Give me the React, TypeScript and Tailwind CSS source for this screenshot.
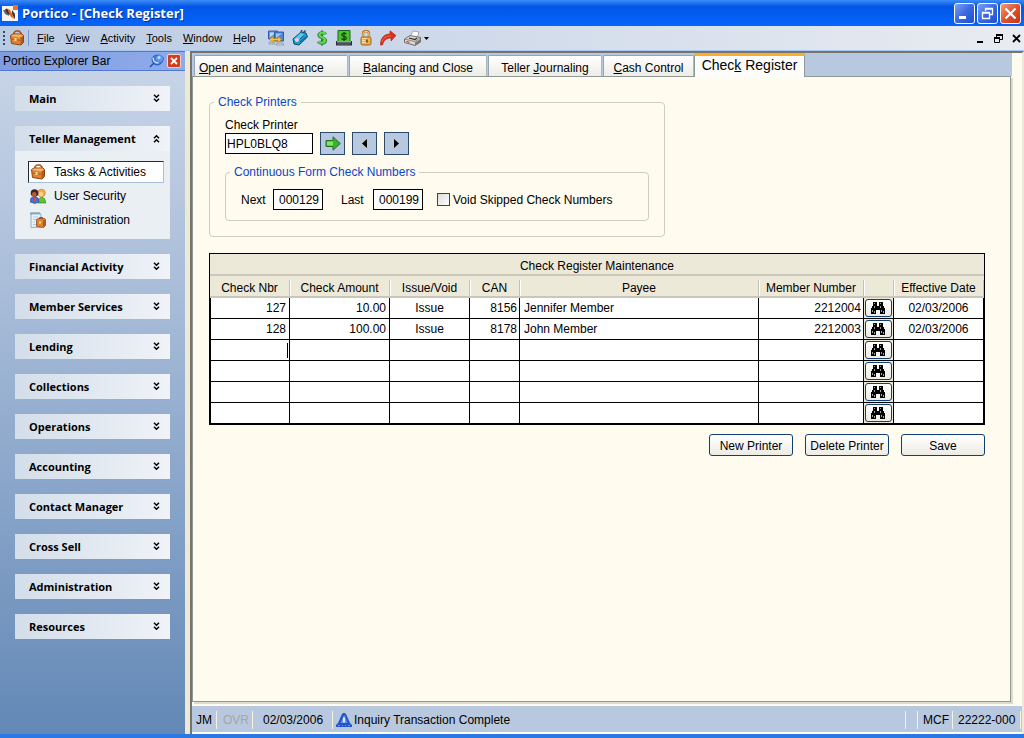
import React from "react";

interface CheckRow {
    nbr: string;
    amount: string;
    type: string;
    can: string;
    payee: string;
    member: string;
    date: string;
}

const emptyRow: CheckRow = { nbr: "", amount: "", type: "", can: "", payee: "", member: "", date: "" };

const rows: CheckRow[] = [
    { nbr: "127", amount: "10.00", type: "Issue", can: "8156", payee: "Jennifer Member", member: "2212004", date: "02/03/2006" },
    { nbr: "128", amount: "100.00", type: "Issue", can: "8178", payee: "John Member", member: "2212003", date: "02/03/2006" },
    emptyRow,
    emptyRow,
    emptyRow,
    emptyRow,
];

const columns: { key: keyof CheckRow | "lookup"; label: string; width: string; align: string }[] = [
    { key: "nbr", label: "Check Nbr", width: "w-20", align: "text-right" },
    { key: "amount", label: "Check Amount", width: "w-[100px]", align: "text-right" },
    { key: "type", label: "Issue/Void", width: "w-20", align: "text-center" },
    { key: "can", label: "CAN", width: "w-[50px]", align: "text-right" },
    { key: "payee", label: "Payee", width: "", align: "text-left" },
    { key: "member", label: "Member Number", width: "w-[105px]", align: "text-right" },
    { key: "lookup", label: "", width: "w-[30px]", align: "" },
    { key: "date", label: "Effective Date", width: "w-[90px]", align: "text-center" },
];

const menus = ["File", "View", "Activity", "Tools", "Window", "Help"];

const sections = [
    "Financial Activity",
    "Member Services",
    "Lending",
    "Collections",
    "Operations",
    "Accounting",
    "Contact Manager",
    "Cross Sell",
    "Administration",
    "Resources",
];

/* ---------- icons ---------- */

const AppIcon = () => (
    <svg width="16" height="16" viewBox="0 0 16 16">
        <rect y="1" width="16" height="15" fill="#f4f3f1" />
        <path d="M11 0h5v5h-5z" fill="#f0701c" />
        <path d="M1 5l5 0 1 6-4-2z" fill="#5b6877" />
        <path d="M4 3l4 2 5 9-4-2z" fill="#e8641a" />
        <path d="M10 5l3 4v5l-3-5z" fill="#4a3a34" />
        <path d="M3 4l2 0 3 6-2-1z" fill="#33231e" />
    </svg>
);

const BriefcaseIcon = () => (
    <svg width="16" height="16" viewBox="0 0 16 16">
        <path d="M5 5V2.500L7 1h3l2 2v2" fill="none" stroke="#a8491c" strokeWidth="1.500" />
        <path d="M1.500 5.500L4 4h9l1.500 1.500v7L12 15 2.500 13.500z" fill="#dd8432" stroke="#94420f" />
        <path d="M2 6l9 1.500L14 6l-1.500-1.500H4z" fill="#f3b468" />
        <path d="M11.500 7.500V14.500l2.500-2V6z" fill="#b35a1c" />
        <path d="M2 9l9.500 1.500" stroke="#b0601f" />
        <rect x="5.500" y="8" width="2" height="3" fill="#fbe08a" />
    </svg>
);

const UsersIcon = () => (
    <svg width="16" height="16" viewBox="0 0 16 16">
        <path d="M8 15l.5-4 3-2 3 1.500 1.500 4.500z" fill="#62c331" stroke="#2d7d1b" strokeWidth=".6" />
        <circle cx="11.500" cy="5" r="3.800" fill="#f0b148" stroke="#ba7420" strokeWidth=".6" />
        <circle cx="11" cy="6.200" r="2.200" fill="#f8d49a" />
        <path d="M0 14l1-4 3.500-1.500L8 10l1 4-4 1.500z" fill="#3f72dc" stroke="#1c3f98" strokeWidth=".6" />
        <circle cx="4.500" cy="5" r="3.800" fill="#3b2430" />
        <circle cx="4.200" cy="6.400" r="2.300" fill="#bd5a2f" />
        <path d="M4 9.500l2 2-2 3-1-3z" fill="#e9403a" />
    </svg>
);

const AdminIcon = () => (
    <svg width="16" height="16" viewBox="0 0 16 16">
        <path d="M1 1h9l1 2v12l-10 .5z" fill="#e6f2fb" stroke="#8daecb" />
        <path d="M1 .5v2M3 .5v2M5 .5v2M7 .5v2M9 .5v2" stroke="#5e7690" />
        <path d="M3 5h5M3 7.500h3M3 10h2M3 12.500h3" stroke="#a5cfe8" />
        <path d="M9.500 7V5.500h3V7" fill="none" stroke="#9a4d16" />
        <path d="M6.500 7.500l2-1h6l1 1v6l-2 2-7-1z" fill="#dd8432" stroke="#98490f" strokeWidth=".8" />
        <path d="M13 8.500v6.500l2-1.500V7.500z" fill="#b35a1c" />
        <rect x="9" y="9.500" width="2" height="2" fill="#fbe08a" />
    </svg>
);

const NetworkIcon = () => (
    <svg width="16" height="16" viewBox="0 0 16 16">
        <path d="M.5 1h9v8h-9z" fill="#5f96e8" stroke="#2f5ca8" />
        <path d="M2 2.500h6L2 7z" fill="#b8dcff" />
        <path d="M6.500 2h9v9h-9z" fill="#4c85de" stroke="#2f5ca8" />
        <path d="M8 3.500h6L8 8z" fill="#9bc9fa" />
        <path d="M1 12h5l1 2H1zM9 13h6l1 2H8z" fill="#c9d3df" stroke="#66758a" strokeWidth=".5" />
        <path d="M1.500 9.500L5 6.500v2h5v-2l3.500 3-3.500 3v-2H5v2z" fill="#fcc737" stroke="#b9821a" strokeWidth=".6" />
    </svg>
);

const PhoneIcon = () => (
    <svg width="16" height="16" viewBox="0 0 16 16">
        <path d="M1 9L9 2l5 1 1.500 4L7 15l-5-1z" fill="#1f9cc4" stroke="#0b4a74" />
        <path d="M9 2.500L12.500 5 5 11.500 1.500 9.500z" fill="#54c8e4" />
        <path d="M9 2l1-2M11.500 2.500l2-2" stroke="#0d5a88" strokeWidth="1.500" />
        <circle cx="5" cy="10" r="2" fill="#f4c8ef" />
        <path d="M8 12l6-5M8 9l4-3.500" stroke="#095c8c" />
    </svg>
);

const DollarIcon = () => (
    <svg width="12" height="16" viewBox="0 0 12 16">
        <path d="M6 .5v15" stroke="#1d7f31" strokeWidth="2" />
        <path d="M9.500 4.500C8.500 2.500 3.500 2 3 5c0 3 6.500 2.500 6.500 5.500-.5 3.500-6 3-7 .8" fill="none" stroke="#3b8f45" strokeWidth="3.400" />
        <path d="M9.500 4.200C8.500 2.500 3.800 2 3.500 5c0 2.500 6 2.500 5.500 5.500-.5 3-5.500 2.500-6.500.8" fill="none" stroke="#62d94d" strokeWidth="2" />
    </svg>
);

const CashIcon = () => (
    <svg width="16" height="16" viewBox="0 0 16 16">
        <path d="M2 .5h12V12H2z" fill="#4fc32d" stroke="#14671d" />
        <path d="M10.300 4.300C9.500 2.800 6 2.800 5.800 4.700c0 2.300 4.700 1.200 4.600 3.400C10 10.100 6.500 10.200 5.500 8.300M8 2v9" fill="none" stroke="#123f17" strokeWidth="1.200" />
        <path d="M0 11h16v4.500H0z" fill="#2c3238" />
        <path d="M1 11h14v1.500H1z" fill="#97a0a8" />
        <path d="M1.500 14h13" stroke="#697179" />
    </svg>
);

const LockIcon = () => (
    <svg width="12" height="16" viewBox="0 0 12 16">
        <path d="M3 8V4c0-4 6-4 6 0v4" fill="none" stroke="#b47a2b" strokeWidth="2.400" />
        <path d="M3 8V4c0-3.500 6-3.500 6 0v4" fill="none" stroke="#f6cf87" strokeWidth="1" />
        <rect x="1" y="7" width="10" height="8" rx="1.500" fill="#f0af4b" stroke="#9f631c" />
        <path d="M2 8.500h5M2 10.500h3M2 12.500h4" stroke="#fde1a1" />
        <path d="M7 9.500v3" stroke="#76400f" strokeWidth="1.500" />
    </svg>
);

const RedArrowIcon = () => (
    <svg width="16" height="16" viewBox="0 0 16 16">
        <path d="M.5 15C.5 8 4 4 10 4V.8l6 4.700-5 5.500V8C6.500 8 4 10 2.500 15z" fill="#e0301c" stroke="#a3200f" strokeWidth=".6" />
        <path d="M2 12c1-4 4-6 9-6" fill="none" stroke="#f4694e" />
    </svg>
);

const PrinterIcon = () => (
    <svg width="17" height="16" viewBox="0 0 17 16">
        <path d="M6 7l3-6 6 1-2 6z" fill="#fff" stroke="#8a8a8a" strokeWidth=".7" />
        <path d="M.5 9L6 5.500l10.500 2V12L11 15.500.5 12.500z" fill="#d8d7d0" stroke="#55564f" strokeWidth=".8" />
        <path d="M1 9.200l10 2.300 5-3.500" fill="none" stroke="#8a8a83" />
        <path d="M5 8l6 1.500 2-1.500" fill="none" stroke="#2e2e2b" strokeWidth="1.200" />
        <path d="M11 12.500v3l5.500-3.500V9z" fill="#77776f" />
        <path d="M2.500 11.500l3 .8" stroke="#c82020" strokeWidth="1" />
    </svg>
);

const PinIcon = () => (
    <svg width="16" height="14" viewBox="0 0 16 14">
        <path d="M1 13l5-5" stroke="#1c4fae" strokeWidth="1.500" />
        <path d="M3 5c0-3 4-4 7-4l4 2c1 4-2 8-6 8-3 0-5-3-5-6z" fill="#3f78dc" stroke="#1c46a2" strokeWidth=".8" />
        <circle cx="10.500" cy="4.500" r="3.600" fill="#5f95ec" />
        <path d="M4 3.500c0 3.500 2 5.500 5.500 5.500" fill="none" stroke="#dbe9ff" strokeWidth="1.300" />
        <circle cx="10" cy="3.500" r="1.500" fill="#c6dcfd" />
    </svg>
);

const AlertIcon = () => (
    <svg width="16" height="16" viewBox="0 0 16 16">
        <path d="M7 1h2l1.500 2L14 11l2 2v2H0v-2l2-2 3.500-8z" fill="#2453c6" />
        <path d="M7.500 3.500L4.500 11h7L9 3.500z" fill="#5f92ee" />
        <path d="M2 13.500h2M6 13.500h1M9 13.500h1M12 13.500h2" stroke="#6d9df0" />
        <path d="M8 5.500v5" stroke="#fff" strokeWidth="1.600" />
    </svg>
);

const BinocularsIcon = () => (
    <svg width="14" height="12" viewBox="0 0 14 12" shapeRendering="crispEdges">
        <path d="M2 0h4v3H2zM8 0h4v3H8zM2 3h4v2H2zM8 3h4v2H8zM1 4h12v4H1zM0 6h5v6H0zM9 6h5v6H9z" fill="#000" />
        <path d="M6 3h2v1H6zM5 8h4v4H5z" fill="#f6f5f1" />
        <path d="M3 1h1v1H3zM9 1h1v1H9zM3 4h1v2H3zM9 4h1v2H9zM1 8h1v2H1zM3 9h1v2H3zM10 8h1v2h-1zM12 9h1v2h-1z" fill="#a3a398" />
    </svg>
);

const Chevrons = ({ up }: { up?: boolean }) => (
    <svg width="7" height="9" viewBox="0 0 7 9" className={up ? "rotate-180" : ""}>
        <path d="M1 .8l2.500 2.400L6 .8M1 4.800l2.500 2.400L6 4.800" fill="none" stroke="#000" strokeWidth="1.500" />
    </svg>
);

const WindowGlyph = ({ kind }: { kind: "min" | "restore" | "close" }) => (
    <svg width="13" height="13" viewBox="0 0 13 13" fill="none" stroke="currentColor">
        {kind === "min" && <path d="M1 10.500h7" strokeWidth="3" />}
        {kind === "restore" && (
            <>
                <path d="M4.500 4V1.500h7v6H9M4 2h8" strokeWidth="1.300" />
                <path d="M1.500 5.500h7v6h-7zM1 6h8" strokeWidth="1.300" />
            </>
        )}
        {kind === "close" && <path d="M1.500 1.500l10 10M11.500 1.500l-10 10" strokeWidth="2.200" />}
    </svg>
);

const MdiGlyph = ({ kind }: { kind: "min" | "restore" | "close" }) => (
    <svg width="9" height="9" viewBox="0 0 9 9" fill="none" stroke="#000">
        {kind === "min" && <path d="M1 8h6" strokeWidth="2" />}
        {kind === "restore" && (
            <>
                <path d="M2.500 3V.5h6v5H6M.5 3.500h5v5h-5z" />
                <path d="M2 1h7M0 4h6" strokeWidth="2" />
            </>
        )}
        {kind === "close" && <path d="M1 1l7 7M8 1L1 8" strokeWidth="1.800" />}
    </svg>
);

/* ---------- window chrome ---------- */

const blueButton =
    "flex h-[21px] w-[21px] items-center justify-center rounded-[3px] border border-white bg-linear-to-br from-[#7f9ff0] via-[#3a68e2] to-[#1f4fd0] text-white";

const TitleBar = () => (
    <header className="flex h-[26px] items-center gap-1 bg-linear-to-b from-[#3a8bf6] via-[#0256e6] via-25% to-[#0565fc] pr-[3px] pl-0.5">
        <AppIcon />
        <h1 className="flex-1 font-['Open_Sans',sans-serif] text-[13px] leading-5 font-bold text-white [text-shadow:1px_1px_0_#0b2f8c]">
            Portico - [Check Register]
        </h1>
        <div className="flex gap-0.5">
            <button aria-label="Minimize" className={blueButton}>
                <WindowGlyph kind="min" />
            </button>
            <button aria-label="Restore" className={blueButton}>
                <WindowGlyph kind="restore" />
            </button>
            <button aria-label="Close" className="flex h-[21px] w-[21px] items-center justify-center rounded-[3px] border border-white bg-linear-to-br from-[#f09a78] via-[#e2512c] to-[#c6330f] text-white">
                <WindowGlyph kind="close" />
            </button>
        </div>
    </header>
);

const MenuBar = () => (
    <div className="flex h-[25px] items-center border-b border-[#a9c6f0] bg-linear-to-r from-[#b9cae3] via-[#cfdaea] via-45% to-[#e9ecf1] pr-[3px] pl-[3px]">
        <div className="mr-1 flex flex-col gap-0.5">
            <span className="h-0.5 w-0.5 bg-[#33496e]" />
            <span className="h-0.5 w-0.5 bg-[#33496e]" />
            <span className="h-0.5 w-0.5 bg-[#33496e]" />
            <span className="h-0.5 w-0.5 bg-[#33496e]" />
        </div>
        <BriefcaseIcon />
        <span className="mr-2 ml-[3px] h-4 w-px bg-[#7796c4]" />
        <nav className="flex gap-[11px] text-[11px] leading-4">
            {menus.map((menu) => (
                <button key={menu}>
                    <u>{menu[0]}</u>
                    {menu.slice(1)}
                </button>
            ))}
        </nav>
        <div className="ml-3 flex items-center gap-2">
            <button aria-label="Connections"><NetworkIcon /></button>
            <button aria-label="Phone"><PhoneIcon /></button>
            <button aria-label="Funds"><DollarIcon /></button>
            <button aria-label="Cash drawer"><CashIcon /></button>
            <button aria-label="Lock"><LockIcon /></button>
            <button aria-label="Forward"><RedArrowIcon /></button>
            <button aria-label="Print" className="flex items-center gap-[3px]">
                <PrinterIcon />
                <svg width="5" height="3" viewBox="0 0 5 3"><path d="M0 0h5L2.500 3z" /></svg>
            </button>
        </div>
        <div className="ml-auto flex gap-[9px]">
            <button aria-label="Minimize document"><MdiGlyph kind="min" /></button>
            <button aria-label="Restore document"><MdiGlyph kind="restore" /></button>
            <button aria-label="Close document"><MdiGlyph kind="close" /></button>
        </div>
    </div>
);

/* ---------- explorer bar ---------- */

const SectionHeader = ({ label, open }: { label: string; open?: boolean }) => (
    <button
        aria-expanded={!!open}
        className="flex h-[25px] w-full items-center justify-between bg-linear-to-r from-[#d3deea] to-[#f0f3f8] pr-2.5 pl-3.5 font-['Open_Sans',sans-serif] text-[11px] leading-4 font-bold"
    >
        {label}
        <Chevrons up={open} />
    </button>
);

const ExplorerBar = () => (
    <aside className="flex w-[185px] shrink-0 flex-col bg-linear-to-b from-[#cad6e8] via-[#a9bdd9] via-35% to-[#6388b6]">
        <div className="flex h-5 items-center border-y border-[#4f78cf] bg-linear-to-r from-[#7f9ce0] to-[#8fabea] pr-1 pl-[3px]">
            <h2 className="flex-1 text-xs leading-4">Portico Explorer Bar</h2>
            <button aria-label="Auto hide" className="mr-0.5"><PinIcon /></button>
            <button aria-label="Close explorer bar" className="flex h-3.5 w-3.5 items-center justify-center rounded-xs border border-[#f6d5cc] bg-[#d93a1c]">
                <svg width="8" height="8" viewBox="0 0 8 8"><path d="M1 1l6 6M7 1L1 7" stroke="#fff" strokeWidth="1.800" /></svg>
            </button>
        </div>
        <div className="flex flex-col gap-[15px] p-[15px]">
            <SectionHeader label="Main" />
            <div>
                <SectionHeader label="Teller Management" open />
                <div className="flex flex-col gap-0.5 bg-[#eaeff4] pt-2.5 pr-1.5 pb-2 pl-[13px] text-xs leading-4">
                    <a href="#tasks" className="flex h-[22px] items-center gap-2 border border-t-[#1c2b3f] border-r-[#a9bfdd] border-b-[#a9bfdd] border-l-[#1c2b3f] bg-white px-px">
                        <BriefcaseIcon />
                        Tasks &amp; Activities
                    </a>
                    <a href="#security" className="flex h-[22px] items-center gap-2 px-0.5">
                        <UsersIcon />
                        User Security
                    </a>
                    <a href="#administration" className="flex h-[22px] items-center gap-2 px-0.5">
                        <AdminIcon />
                        Administration
                    </a>
                </div>
            </div>
            {sections.map((section) => (
                <SectionHeader key={section} label={section} />
            ))}
        </div>
    </aside>
);

/* ---------- work area ---------- */

const tabClass =
    "h-[21px] rounded-t-xs border border-b-0 border-[#8da5bd] bg-linear-to-b from-white to-[#edece6] text-xs leading-6 border-r-[#b3b7ae]";

const Tabs = () => (
    <div role="tablist" className="flex h-[23px] items-end gap-px bg-[#b8c8df] pl-0.5">
        <button role="tab" aria-selected="false" className={`${tabClass} w-[154px] pl-1 text-left`}><u>O</u>pen and Maintenance</button>
        <button role="tab" aria-selected="false" className={`${tabClass} w-[138px]`}><u>B</u>alancing and Close</button>
        <button role="tab" aria-selected="false" className={`${tabClass} w-[114px]`}>Teller <u>J</u>ournaling</button>
        <button role="tab" aria-selected="false" className={`${tabClass} w-[91px]`}><u>C</u>ash Control</button>
        <button role="tab" aria-selected="true" className="relative z-10 -mb-px -ml-px h-6 w-[111px] rounded-t-xs border-x border-t-3 border-x-[#8a9a9f] border-t-[#fbae2c] bg-[#fdfdfb] text-sm leading-4">
            <span className="block pb-1">Chec<u>k</u> Register</span>
        </button>
    </div>
);

const squareButton = "flex h-[23px] w-[25px] items-center justify-center border border-[#2c4a6b] bg-[#b8c8df]";
const fieldInput = "h-[21px] border border-black bg-white text-xs leading-4 outline-none";

const CheckPrinters = () => (
    <fieldset className="w-full max-w-[456px] rounded-sm border border-[#cfcdbd] pr-[15px] pb-[15px] pl-[15px]">
        <legend className="-ml-[11px] px-1 text-xs leading-4 text-[#0a46c8]">Check Printers</legend>
        <div className="pt-2">
            <label htmlFor="printer" className="block text-xs leading-[14px]">Check Printer</label>
            <div className="flex items-center gap-[7px]">
                <input id="printer" defaultValue="HPL0BLQ8" className={`${fieldInput} w-[88px] px-px`} />
                <button aria-label="Go" className={squareButton}>
                    <svg width="16" height="15" viewBox="0 0 16 15">
                        <path d="M1 4.500h7V.8L15.300 7.500 8 14.200v-3.700H1z" fill="#3cb22c" stroke="#226d3a" />
                        <path d="M2 5.500h6v4H2z" fill="#86e850" />
                    </svg>
                </button>
                <button aria-label="Previous printer" className={squareButton}>
                    <svg width="5" height="9" viewBox="0 0 5 9"><path d="M5 0v9L0 4.500z" /></svg>
                </button>
                <button aria-label="Next printer" className={squareButton}>
                    <svg width="5" height="9" viewBox="0 0 5 9"><path d="M0 0v9l5-4.500z" /></svg>
                </button>
            </div>
        </div>
        <fieldset className="mt-[9px] rounded-sm border border-[#cfcdbd] pt-[9px] pr-4 pb-2.5 pl-[15px]">
            <legend className="-ml-[11px] px-1 text-xs leading-4 text-[#0a46c8]">Continuous Form Check Numbers</legend>
            <div className="flex items-center text-xs leading-4">
                <label htmlFor="next" className="w-8">Next</label>
                <input id="next" defaultValue="000129" className={`${fieldInput} w-[50px] px-[3px] text-right`} />
                <label htmlFor="last" className="ml-[18px] w-8">Last</label>
                <input id="last" defaultValue="000199" className={`${fieldInput} w-[50px] px-[3px] text-right`} />
                <input id="void" type="checkbox" className="ml-3.5 h-[13px] w-[13px] appearance-none border border-[#1c4a7a] bg-linear-to-br from-[#dcdcd7] to-white" />
                <label htmlFor="void" className="ml-[3px]">Void Skipped Check Numbers</label>
            </div>
        </fieldset>
    </fieldset>
);

const RegisterTable = () => (
    <table className="w-full table-fixed border-separate border-spacing-0 border border-black text-xs leading-4">
        <colgroup>
            {columns.map((col) => (
                <col key={col.key} className={col.width} />
            ))}
        </colgroup>
        <thead className="bg-[#ece9d8]">
            <tr>
                <th colSpan={8} className="h-[22px] border-b-2 border-[#cbc7b8] p-0 pt-1 font-normal">
                    Check Register Maintenance
                </th>
            </tr>
            <tr>
                {columns.map((col) => (
                    <th key={col.key} scope="col" className="group h-[22px] border-b-2 border-[#cbc7b8] p-0 pt-1 font-normal">
                        <div className="h-4 border-r border-[#c5c2b2] whitespace-nowrap shadow-[1px_0_0_#fff] group-last:shadow-none">{col.label}</div>
                    </th>
                ))}
            </tr>
        </thead>
        <tbody>
            {rows.map((row, i) => (
                <tr key={i}>
                    {columns.map((col) =>
                        col.key === "lookup" ? (
                            <td key={col.key} className="h-[21px] border-r border-b border-black bg-[#ece9d8] p-0">
                                <button
                                    aria-label={`Find member for row ${i + 1}`}
                                    className="mx-auto flex h-[18px] w-[27px] items-center justify-center rounded-[3px] border border-[#0f3f73] bg-linear-to-b from-white to-[#ecebe5]"
                                >
                                    <BinocularsIcon />
                                </button>
                            </td>
                        ) : (
                            <td key={col.key} className="h-[21px] border-r border-b border-black bg-white p-0 first:border-l">
                                <div className="flex h-5 items-center">
                                    <input
                                        aria-label={`${col.label} ${i + 1}`}
                                        defaultValue={row[col.key]}
                                        className={`h-4 w-full min-w-0 flex-1 bg-transparent outline-none ${col.key === "payee" ? "px-1" : col.key === "nbr" || col.key === "amount" ? "px-[3px]" : "px-0.5"} ${col.align}`}
                                    />
                                    {i === 2 && col.key === "nbr" && <span className="mr-px h-[15px] w-px bg-black" />}
                                </div>
                            </td>
                        )
                    )}
                </tr>
            ))}
        </tbody>
    </table>
);

const actionButton =
    "h-[22px] w-[84px] rounded-[3px] border border-[#0f3f73] bg-linear-to-b from-white to-[#ecebe5] pt-px text-xs leading-5 whitespace-nowrap";

const StatusBar = () => (
    <footer className="mb-0.5 flex h-[26px] items-center bg-[#b8c8df] pt-0.5 text-xs leading-4">
        <span className="w-6 pl-1">JM</span>
        <span className="flex h-[18px] w-[37px] items-center border-x border-[#f7f1e4] pl-1.5 text-[#a7a69f]">OVR</span>
        <span className="flex h-[18px] w-20 items-center border-r border-[#f7f1e4] pl-2.5">02/03/2006</span>
        <span className="flex flex-1 items-center gap-0.5 pl-[3px]">
            <AlertIcon />
            Inquiry Transaction Complete
        </span>
        <span className="h-[18px] w-[13px] border-x border-[#f7f1e4]" />
        <span className="flex h-[18px] w-[35px] items-center border-r border-[#f7f1e4] pl-[5px]">MCF</span>
        <span className="mr-px flex h-[18px] w-[68px] items-center border-r border-[#f7f1e4] pl-[5px]">22222-000</span>
    </footer>
);

const App: React.FC = () => (
    <div className="flex min-h-screen flex-col border-b-4 border-[#2a78e4] bg-[#ece9d8] font-['Liberation_Sans',Arial,sans-serif] text-black">
        <TitleBar />
        <MenuBar />
        <div className="flex flex-1">
            <ExplorerBar />
            <main className="ml-[5px] flex min-w-0 flex-1 flex-col border-t-2 border-r-2 border-l-2 border-t-[#77746c] border-r-[#ece9d8] border-l-[#77746c] bg-[#fffbee]">
                <div className="flex flex-1 flex-col pr-2.5 pb-1">
                    <Tabs />
                    <section className="mr-px flex-1 border border-[#8f9996] pt-[17px] pr-[25px] pl-4 shadow-[2px_2px_0_#dedbcb]">
                        <CheckPrinters />
                        <div className="mt-4">
                            <RegisterTable />
                        </div>
                        <div className="mt-[9px] flex justify-end gap-3">
                            <button className={actionButton}>New Printer</button>
                            <button className={actionButton}>Delete Printer</button>
                            <button className={actionButton}>Save</button>
                        </div>
                    </section>
                </div>
                <StatusBar />
            </main>
        </div>
    </div>
);

export default App;
